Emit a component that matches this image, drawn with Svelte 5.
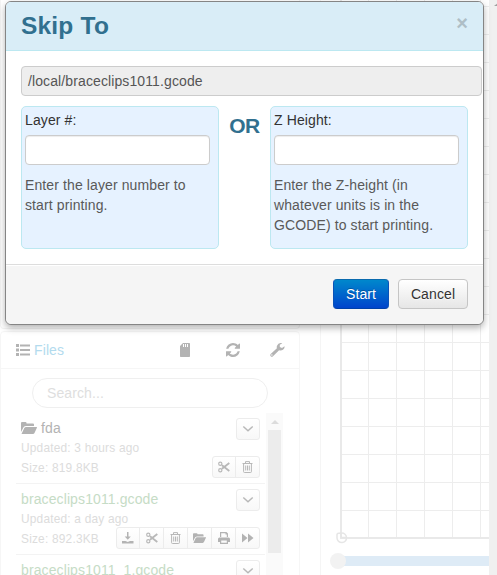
<script>
  const files = [
    { name: 'fda', folder: true, updated: '3 hours ago', size: '819.8KB', actions: ['cut', 'trash'] },
    { name: 'braceclips1011.gcode', updated: 'a day ago', size: '892.3KB', actions: ['download', 'cut', 'trash', 'folder', 'print', 'forward'] },
    { name: 'braceclips1011_1.gcode', actions: [] }
  ];
  const gridX = [28.5, 56.5, 84.5, 112.5, 140.5];
  const gridY = Array.from({ length: 19 }, (_, i) => 6.5 + i * 28);
</script>

{#snippet icon(kind)}
  {#if kind === 'list'}
    <svg width="14" height="12" viewBox="0 0 14 12"><path d="M0 0h3v3H0zM0 4.5h3v3H0zM0 9h3v3H0zM4 .5h10v2H4zM4 5h10v2H4zM4 9.5h10v2H4z" /></svg>
  {:else if kind === 'sd'}
    <svg width="10" height="14" viewBox="0 0 10 14"><path fill-rule="evenodd" d="M3 0h6.3q.7 0 .7.7v12.6q0 .7-.7.7H.7Q0 14 0 13.3V3zM3 1v3h1V1zM5 1v3h1V1zM7 1v3h1V1z" /></svg>
  {:else if kind === 'refresh'}
    <svg width="14" height="14" viewBox="0 0 1536 1536"><path d="M1511 928q0 5-1 7-64 268-268 434.500T764 1536q-146 0-282.500-55T238 1324l-129 129q-19 19-45 19t-45-19-19-45V960q0-26 19-45t45-19h448q26 0 45 19t19 45-19 45l-137 137q71 66 161 102t187 36q134 0 250-65t186-179q11-17 53-117 8-23 30-23h192q13 0 22.500 9.500t9.500 22.500zM1536 128v448q0 26-19 45t-45 19h-448q-26 0-45-19t-19-45 19-45l138-138Q969 256 768 256q-134 0-250 65T332 500q-11 17-53 117-8 23-30 23H50q-13 0-22.500-9.500T18 608v-7q65-268 270-434.500T768 0q146 0 284 55.500T1297 212l130-129q19-19 45-19t45 19 19 45z" /></svg>
  {:else if kind === 'wrench'}
    <svg width="15" height="14" viewBox="0 0 15 14"><path fill-rule="evenodd" d="M14.500 3.200 12 4.900 9.800 3.900V1.700L12.300.2Q11.700-.1 10.500.1 8.100.5 7 2.700q-.5 1.300-.1 2.500L.7 11q-.9 1.200 0 2.300 1.100 1.100 2.300 0L9.100 7.300q2 .8 3.900-.5 1.900-1.400 1.500-3.600zM1.200 12a.7.7 0 1 1 1.400 0 .7.7 0 0 1-1.400 0z" /></svg>
  {:else if kind === 'folder'}
    <svg class="folder" viewBox="0 0 16 12"><path d="M0 10V1Q0 0 1 0h3.500q1 0 1 1v.5H12q1 0 1 1V4H5Q3.600 4 2.700 5zM.5 12 3.300 6Q3.900 5 5 5h10.500q.8 0 .4.800L13.500 11q-.5 1-1.500 1z" /></svg>
  {:else if kind === 'cut'}
    <svg width="12" height="12" viewBox="0 0 12 12"><path class="line" d="M4 4.300 11.300 10M4 7.700 11.300 2" stroke-width="1.800" /><circle class="line" cx="2.300" cy="2.700" r="1.600" stroke-width="1.200" /><circle class="line" cx="2.300" cy="9.300" r="1.600" stroke-width="1.200" /></svg>
  {:else if kind === 'trash'}
    <svg width="11" height="12" viewBox="0 0 11 12"><path class="line" d="M.5 2.500h10M3.500 2V.6h4V2M1.600 3v7.700q0 .8.8.8h6.200q.8 0 .8-.8V3M3.700 4.500v5M5.500 4.500v5M7.300 4.500v5" /></svg>
  {:else if kind === 'download'}
    <svg width="12" height="12" viewBox="0 0 12 12"><path d="M5 0h1.500v4.500h2.300L5.750 7.800 2.700 4.500H5zM0 9h3.500l2.250 1L8 9h3.500v2.500H0z" /></svg>
  {:else if kind === 'print'}
    <svg width="12" height="12" viewBox="0 0 12 12"><path fill-rule="evenodd" d="M2 0h6.500L10 1.500V5H8.800V2.500H7.500V1.200H3.200V5H2zM1.500 5.500h9Q12 5.500 12 7v3h-2v2H2v-2H0V7q0-1.500 1.500-1.500zM3.200 8.500v2.300h5.600V8.500z" /></svg>
  {:else if kind === 'forward'}
    <svg width="12" height="10" viewBox="0 0 12 10"><path d="M0 .5 5.500 5 0 9.500zM6 .5 11.500 5 6 9.500z" /></svg>
  {:else if kind === 'chevron'}
    <svg width="12" height="8" viewBox="0 0 12 8"><path class="line" d="M1.300 1.500 6 5.700l4.700-4.200" stroke-width="1.500" /></svg>
  {/if}
{/snippet}

<div class="page">
  <main>
    <aside>
      <div class="state-panel"></div>
      <section class="files">
        <header>
          {@render icon('list')}<a href="#files">Files</a>
          <div class="tools">
            {@render icon('sd')}{@render icon('refresh')}{@render icon('wrench')}
          </div>
        </header>
        <div class="search">Search...</div>
        <div class="scroller">
          <div class="entries">
            {#each files as file}
              <article>
                <div class="info">
                  <div class="name" class:plain={file.folder}>
                    {#if file.folder}{@render icon('folder')}{/if}{file.name}
                  </div>
                  {#if file.size}
                    <small>Updated: {file.updated}</small>
                    <small>Size: {file.size}</small>
                  {/if}
                </div>
                <div class="side">
                  <div class="group"><span>{@render icon('chevron')}</span></div>
                  {#if file.actions.length}
                    <div class="group">
                      {#each file.actions as action}<span>{@render icon(action)}</span>{/each}
                    </div>
                  {/if}
                </div>
              </article>
            {/each}
          </div>
          <div class="track"><i></i><b></b></div>
        </div>
      </section>
    </aside>
    <section class="viewer">
      <svg class="grid" width="153" height="546" viewBox="-4 0 153 546">
        {#each gridX as x}<path d="M{x} 0V538" />{/each}
        {#each gridY as y}<path d="M1 {y}H149" />{/each}
        <path class="axis" d="M1 0V538H149" />
        <path class="origin" d="M1 533H1.500A4.800 4.800 0 1 1-3 538V534.500Q-3 533 1 533V537.500H6" />
      </svg>
      <div class="slider"><i></i></div>
    </section>
    <div class="page-scroll"><i></i></div>
  </main>

  <div class="modal">
    <header><h3>Skip To</h3><span>×</span></header>
    <div class="body">
      <div class="path">/local/braceclips1011.gcode</div>
      <div class="choices">
        <div class="choice">
          <label for="layer">Layer #:</label>
          <input id="layer" />
          <p>Enter the layer number to<br />start printing.</p>
        </div>
        <strong>OR</strong>
        <div class="choice">
          <label for="height">Z Height:</label>
          <input id="height" />
          <p>Enter the Z-height (in<br />whatever units is in the<br />GCODE) to start printing.</p>
        </div>
      </div>
    </div>
    <footer>
      <button class="primary">Start</button>
      <button>Cancel</button>
    </footer>
  </div>
</div>

<style>
  :global(body) { background: #fff; overflow: hidden; }
  * { box-sizing: border-box; }
  .page {
    position: relative; width: 497px; height: 575px; overflow: hidden; background: #fff;
    font: 14px/20px "Liberation Sans", Arial, sans-serif; letter-spacing: .11px; color: #333;
  }
  main { display: flex; height: 575px; }
  svg { display: block; flex: none; fill: #b3b3b3; }
  .line { fill: none; stroke: #b8b8b8; }
  .folder { width: 16px; height: 12px; }

  aside { width: 300px; flex: none; }
  .state-panel { height: 329px; border: 1px solid #f4f4f4; border-top: 0; border-radius: 0 0 4px 4px; }
  .files { margin-top: 2px; height: 260px; border: 1px solid #f6f6f6; border-radius: 4px; }
  .files header { height: 37px; display: flex; align-items: center; padding: 0 14px 0 15px; border-bottom: 1px solid #f6f6f6; }
  .files a { margin-left: 4px; color: #b3dbee; text-decoration: none; }
  .tools { margin-left: auto; display: flex; align-items: center; }
  .tools :global(svg:nth-child(2)) { margin: 0 30px 0 36px; }
  .search { width: 236px; height: 30px; margin: 9px 0 0 31px; border: 1px solid #efefef; border-radius: 15px; padding: 4px 14px; color: #dedede; }
  .scroller { display: flex; margin: 5px 0 0 15px; height: 170px; }
  .entries { width: 249px; }
  article { height: 71px; border-bottom: 1px solid #f3f3f3; padding: 5px 5px 0; display: flex; justify-content: space-between; }
  .info { white-space: nowrap; width: 90px; }
  .name { display: flex; align-items: center; gap: 4px; color: #c6dcc6; height: 20px; }
  .name.plain { color: #b3b3b3; }
  small { display: block; font-size: 11.900px; letter-spacing: .2px; color: #dcdcdc; }
  .side { display: flex; flex-direction: column; align-items: flex-end; gap: 16px; }
  .group { display: flex; height: 22px; border: 1px solid #ececec; border-radius: 3px; background: linear-gradient(#fff, #f8f8f8); }
  .group span { width: 24px; display: flex; align-items: center; justify-content: center; border-left: 1px solid #ececec; }
  .group span:first-child { border: 0; width: 22px; }
  .group .folder { width: 13px; height: 10px; }
  .track { width: 17px; margin-left: 1px; padding: 7px 2px; background: #fafafa; }
  .track i { display: block; width: 0; margin: 0 auto; border: 4px solid transparent; border-top: 0; border-bottom-color: #dcdcdc; }
  .track b { display: block; width: 13px; height: 123px; margin-top: 6px; background: #ececec; }

  .viewer { margin-left: 20px; width: 169px; border-left: 1px solid #f5f5f5; overflow: hidden; }
  .grid { margin-left: 15px; fill: none; stroke: #ededed; stroke-width: 1; }
  .grid .axis { stroke: #e9e9e9; stroke-width: 2; }
  .grid .origin { stroke: #e6e6e6; stroke-width: 1.500; }
  .slider { margin: 10px 0 0 17px; height: 10px; background: #deebf6; }
  .slider i { display: block; width: 16px; height: 16px; border-radius: 50%; background: #f2f2f2; position: relative; left: -8px; top: -3px; }
  .page-scroll { width: 8px; background: #f0f0f0; padding: 3px 0 0 5px; overflow: hidden; }
  .page-scroll i { display: block; width: 0; border: 4px solid transparent; border-top: 0; border-bottom: 3px solid #a0a0a0; }

  .modal {
    position: absolute; left: 5px; top: 1px; width: 479px; height: 324px; overflow: visible;
    display: flex; flex-direction: column; background: #fff; border: 1px solid #858585; border-radius: 6px;
    box-shadow: 0 3px 7px rgba(0, 0, 0, .3);
  }
  .modal header { height: 49px; flex: none; padding: 9px 15px; display: flex; justify-content: space-between; background: #d9edf7; border-bottom: 1px solid #bce8f1; border-radius: 5px 5px 0 0; }
  h3 { margin: 0; font-size: 24.500px; line-height: 30px; color: #31708f; letter-spacing: .2px; }
  .modal header span { font-size: 20px; line-height: 24px; font-weight: bold; color: #aebec6; }
  .body { height: 213px; flex: none; padding: 15px; }
  .path { width: 461px; height: 30px; padding: 4px 6px; background: #eee; border: 1px solid #ccc; border-radius: 4px; color: #555; }
  .choices { display: flex; margin-top: 10px; }
  .choice { width: 198px; height: 143px; padding: 3px; flex: none; background: #e6f2ff; border: 1px solid #bce8f1; border-radius: 5px; }
  .choice label { display: block; }
  input { display: block; width: 185px; height: 30px; margin: 5px 0 10px; background: #fff; border: 1px solid #ccc; border-radius: 4px; box-shadow: inset 0 1px 1px rgba(0, 0, 0, .075); }
  p { margin: 0; color: #595959; white-space: nowrap; }
  strong { width: 51px; flex: none; text-align: center; padding-top: 10px; font-size: 21px; line-height: 20px; color: #31708f; letter-spacing: -.5px; }
  footer { flex: 1; display: flex; justify-content: flex-end; gap: 9px; padding: 14px 15px; background: #f5f5f5; border-top: 1px solid #ddd; border-radius: 0 0 6px 6px; box-shadow: inset 0 1px #fff; }
  button { width: 70px; height: 30px; padding: 0; border: 1px solid #c5c5c5; border-radius: 4px; background: linear-gradient(#fff, #e6e6e6); font: inherit; letter-spacing: inherit; color: #333; text-shadow: 0 1px 1px rgba(255, 255, 255, .75); }
  .primary { width: 56px; background: linear-gradient(#08c, #04c); border-color: #0a6aae #0a52b8 #0040a8; color: #fff; text-shadow: 0 -1px rgba(0, 0, 0, .25); }
</style>
